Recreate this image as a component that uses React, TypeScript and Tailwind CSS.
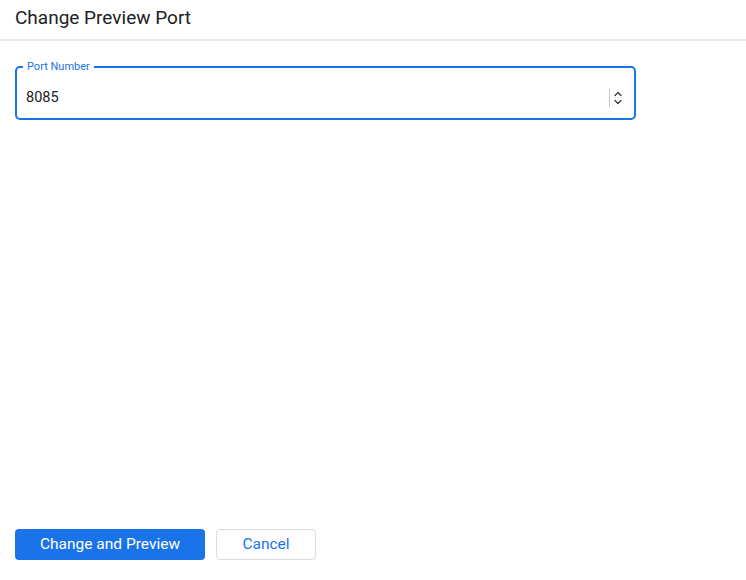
import { useState } from "react";

const font = { fontFamily: "Roboto, 'Noto Sans', Arial, sans-serif" };

const Spinner = () => (
    <div className="flex items-center gap-[3px]">
        <div className="h-[18px] w-px bg-[#c8c8c8]" />
        <svg width="10" height="18" viewBox="0 0 10 18" fill="none" stroke="#3c4043" strokeWidth="1.4" strokeLinecap="round" strokeLinejoin="round">
            <path d="M2 6.5 L5 3.5 L8 6.5" />
            <path d="M2 11.5 L5 14.5 L8 11.5" />
        </svg>
    </div>
);

export default function App() {
    const [port, setPort] = useState("8085");

    return (
        <div className="h-screen flex flex-col bg-white text-[#202124]" style={font}>
            <div className="h-[41px] px-[15px] flex items-center border-b-2 border-[#e8e8e8]">
                <h1 className="text-[19px] leading-none pb-[4px]">Change Preview Port</h1>
            </div>

            <div className="flex-1 px-[15px] pt-[25px]">
                <div className="relative w-[621px] h-[54px] border-2 border-[#1a73e8] rounded-[5px] pl-[9px] pr-[11px] pt-[9px] flex items-center">
                    <span className="absolute left-[6px] -top-[8px] px-[4px] bg-white text-[11px] leading-[14px] text-[#1a73e8]">
                        Port Number
                    </span>
                    <input
                        autoFocus
                        value={port}
                        onChange={(e) => setPort(e.target.value)}
                        className="flex-1 outline-none text-[14.5px] text-[#202124] bg-transparent caret-[#202124]"
                        style={font}
                    />
                    <Spinner />
                </div>
            </div>

            <div className="flex gap-[11px] px-[15px] pb-[20px]">
                <button className="w-[190px] h-[31px] rounded-[4px] bg-[#1a73e8] text-white text-[15.5px]">
                    Change and Preview
                </button>
                <button className="w-[100px] h-[31px] rounded-[4px] border border-[#dadce0] text-[#1a73e8] text-[15.5px]">
                    Cancel
                </button>
            </div>
        </div>
    );
}
